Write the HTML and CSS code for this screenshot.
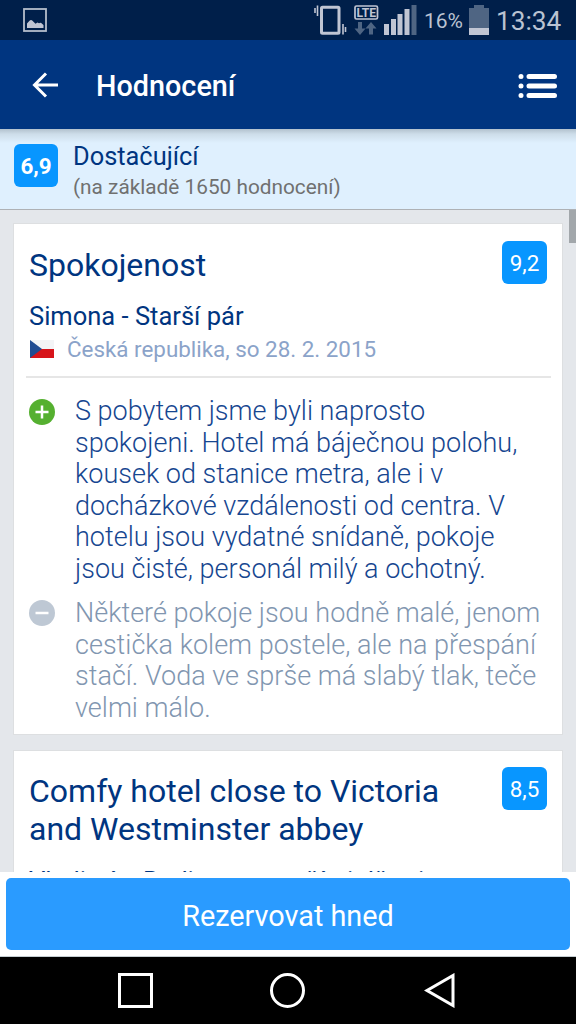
FILE: index.html
```html
<!DOCTYPE html>
<html lang="cs">
<head>
<meta charset="utf-8">
<title>Hodnocení</title>
<link rel="stylesheet" href="styles.css">
</head>
<body>
<div class="screen">
  <div class="status">
    <svg class="status-photo" width="24" height="24" viewBox="0 0 24 24"><rect x="1" y="1" width="22" height="22" fill="none" stroke="#b4bdcb" stroke-width="1.800"/><path d="M4 20v-4.500l2.500-2.700q1.500-1.600 3 0l3 3 2-1.400 1.500.8q2-1 3 .5l1.500 1.300v3z" fill="#c0c5d3"/></svg>
    <svg class="status-icons" width="104" height="32" viewBox="0 0 104 32">
      <g fill="none" stroke="#c0c5d3"><rect x="8.500" y="4.200" width="17.500" height="26" rx="1" stroke-width="3"/><path d="M4.500 2.500v10.500M2 5v5M30 21v10.500M32.500 24v5" stroke-width="1.600"/></g>
      <rect x="42" y="3" width="22.500" height="13" rx="1.500" fill="none" stroke="#c0c5d3" stroke-width="1.700"/>
      <text class="lte" x="43.500" y="14.300" textLength="19.500" lengthAdjust="spacingAndGlyphs">LTE</text>
      <path d="M45 19h4v6.500h3.500l-5.500 6.500-5.500-6.500h3.500zM56 31.500h4v-6h3.500L58 19l-5.500 6.500h3.500z" fill="#4f6583"/>
      <path d="M71 21h5v11h-5zM78 16h5v16h-5zM84.500 11h5v21h-5zM91.500 6h5v26h-5z" fill="#c0c5d3"/><path d="M98.500 2h5v30h-5z" fill="#4f6583"/>
    </svg>
    <span class="percent">16%</span>
    <svg class="battery" width="20" height="30" viewBox="0 0 20 30"><path d="M5 0h10v3h5v27H0V3h5z" fill="#4f6583"/><path d="M0 23h20v7H0z" fill="#c0c5d3"/></svg>
    <span class="clock">13:34</span>
  </div>
  <header class="toolbar">
    <svg class="back" width="28" height="28" viewBox="0 0 28 28"><path d="M15 2.500 3.500 14 15 25.500M3.500 14H27" fill="none" stroke="#fff" stroke-width="3"/></svg>
    <h1 class="toolbar-title">Hodnocení</h1>
    <svg class="menu" width="40" height="26" viewBox="0 0 40 26"><g stroke="#fff" stroke-width="5" stroke-linecap="round"><path d="M11 3.500h25.500M11 13h25.500M11 22.500h25.500M3 3.500h.01M3 13h.01M3 22.500h.01"/></g></svg>
  </header>
  <section class="summary">
    <span class="score score-bold">6,9</span>
    <div class="summary-text">
      <div class="summary-title"><span>Dostačující</span></div>
      <div class="summary-count"><span>(na základě 1650 hodnocení)</span></div>
    </div>
  </section>
  <main class="list">
    <div class="scrollbar"></div>
    <article class="card">
      <div class="card-head"><h2 class="card-title">Spokojenost</h2><span class="score">9,2</span></div>
      <div class="author">Simona - Starší pár</div>
      <div class="origin">
        <svg width="24" height="18" viewBox="0 0 24 18"><path d="M0 0h24v18H0z" fill="#f3f4f6"/><path d="M0 9h24v9H0z" fill="#d7141a"/><path d="M0 0l12 9-12 9z" fill="#204c92"/></svg>
        <span>Česká republika, so 28. 2. 2015</span>
      </div>
      <div class="comment">
        <svg class="mark" width="26" height="26" viewBox="0 0 26 26"><circle cx="13" cy="13" r="13" fill="#55b030"/><path d="M6.500 13h13M13 6.500v13" stroke="#fff" stroke-width="2.500"/></svg>
        <p class="comment-text">S pobytem jsme byli naprosto<br>spokojeni. Hotel má báječnou polohu,<br>kousek od stanice metra, ale i v<br>docházkové vzdálenosti od centra. V<br>hotelu jsou vydatné snídaně, pokoje<br>jsou čisté, personál milý a ochotný.</p>
      </div>
      <div class="comment comment-minus">
        <svg class="mark" width="26" height="26" viewBox="0 0 26 26"><circle cx="13" cy="13" r="13" fill="#bec8d4"/><path d="M6.500 13h13" stroke="#fff" stroke-width="2.500"/></svg>
        <p class="comment-text">Některé pokoje jsou hodně malé, jenom<br>cestička kolem postele, ale na přespání<br>stačí. Voda ve sprše má slabý tlak, teče<br>velmi málo.</p>
      </div>
    </article>
    <article class="card">
      <div class="card-head"><h2 class="card-title">Comfy hotel close to Victoria<br>and Westminster abbey</h2><span class="score">8,5</span></div>
      <div class="author">Vladimír - Rodina se staršími dětmi</div>
    </article>
  </main>
  <footer class="booking"><button class="book">Rezervovat hned</button></footer>
  <nav class="navbar">
    <svg width="35" height="35" viewBox="0 0 35 35"><path d="M1.500 1.500h32v32h-32z"/></svg>
    <svg width="35" height="35" viewBox="0 0 35 35"><circle cx="17.500" cy="17.500" r="16"/></svg>
    <svg class="nav-back" width="31" height="35" viewBox="0 0 31 35"><path d="M29 2.500v30L3 17.500z"/></svg>
  </nav>
</div>
</body>
</html>
```
FILE: styles.css
```css
* { box-sizing: border-box; }
body, h1, h2, p { margin: 0; }
body { font-family: Roboto, "Noto Sans", sans-serif; }
svg { display: block; flex: none; }
.screen { width: 576px; height: 1024px; display: flex; flex-direction: column; overflow: hidden; background: #fff; }
.screen > * { flex: none; }

.status { height: 40px; padding-left: 23px; display: flex; align-items: flex-start; background: #001f4a; color: #bac3d2; white-space: nowrap; }
.status-photo { margin-top: 8px; }
.status-icons { margin: 3px 0 0 266px; }
.lte { font-size: 13px; font-weight: 700; fill: #c0c5d3; }
.percent { width: 45px; margin: 8px 0 0 7px; font-size: 21px; line-height: 26px; }
.battery { margin-top: 5px; }
.clock { margin: 5px 0 0 7px; font-size: 26.200px; line-height: 32px; }

.toolbar { height: 89px; padding: 0 18px 0 31px; display: flex; align-items: center; background: #003580; color: #fff; }
.toolbar-title { flex: 1; margin-left: 37px; padding-top: 3px; font-size: 28.800px; line-height: 34px; font-weight: 500; }
.menu { margin-top: 2px; }

.summary { height: 81px; padding: 15px 14px 0; display: flex; gap: 15px; background: linear-gradient(#b2c1cd, #cddde9 5px, #dff0fe 14px); border-bottom: 1px solid #aeb1b5; }
.summary-text { margin-top: -4px; white-space: nowrap; }
.summary-title { font-size: 25.400px; line-height: 32px; color: #003580; }
.summary-count { font-size: 20.800px; line-height: 30px; color: #707070; }
.score { flex: none; width: 45px; height: 43px; border-radius: 6px; background: #0896ff; color: #fff; font-size: 22.400px; line-height: 45px; text-align: center; }
.score-bold { width: 44px; font-weight: 700; }

.list { position: relative; height: 662px; padding: 13px 13px 0; display: flex; flex-direction: column; gap: 15px; overflow: hidden; background: #e4e7eb; }
.scrollbar { position: absolute; top: 0; right: 0; width: 7px; height: 33px; background: #a2a7ab; }
.card { flex: none; height: 512px; padding: 17px 11px 0 15px; border: 1px solid #dddfe1; background: #fff; }
.card + .card { padding-top: 16px; }
.card-head { display: flex; justify-content: space-between; padding-right: 4px; }
.card-title { padding-top: 5px; font-size: 32px; line-height: 38px; font-weight: 400; color: #003580; white-space: nowrap; }
.author { margin-top: 16px; font-size: 25.500px; line-height: 32px; color: #003580; white-space: nowrap; }
.card + .card .author { margin-top: 17px; }
.origin { height: 46px; margin-left: -3px; padding: 1px 0 0 4px; display: flex; align-items: flex-start; gap: 13px; border-bottom: 2px solid #e6e6e6; color: #8ba3c9; font-size: 22.400px; line-height: 32px; white-space: nowrap; }
.origin svg { margin-top: 7px; }
.comment { display: flex; gap: 20px; margin-top: 18px; color: #164690; }
.mark { margin-top: 3px; }
.comment-text { font-size: 27.040px; line-height: 31.500px; font-weight: 300; white-space: nowrap; }
.comment-minus { margin-top: 13px; color: #8196b0; }
.comment-minus .mark { margin-top: 2px; }

.booking { height: 85px; padding: 6px; background: #fff; border-bottom: 1px solid #c5ced2; }
.book { display: block; width: 564px; height: 72px; padding: 3px 0 0; border: 0; border-radius: 5px; background: #2a9bff; color: #fff; font: 400 28.800px/34px Roboto, sans-serif; }
.navbar { height: 67px; padding: 16px 0 0 118px; display: flex; gap: 117px; background: #000; }
.nav-back { margin-left: 2px; }
.navbar svg { fill: none; stroke: #fff; stroke-width: 3; }
```
